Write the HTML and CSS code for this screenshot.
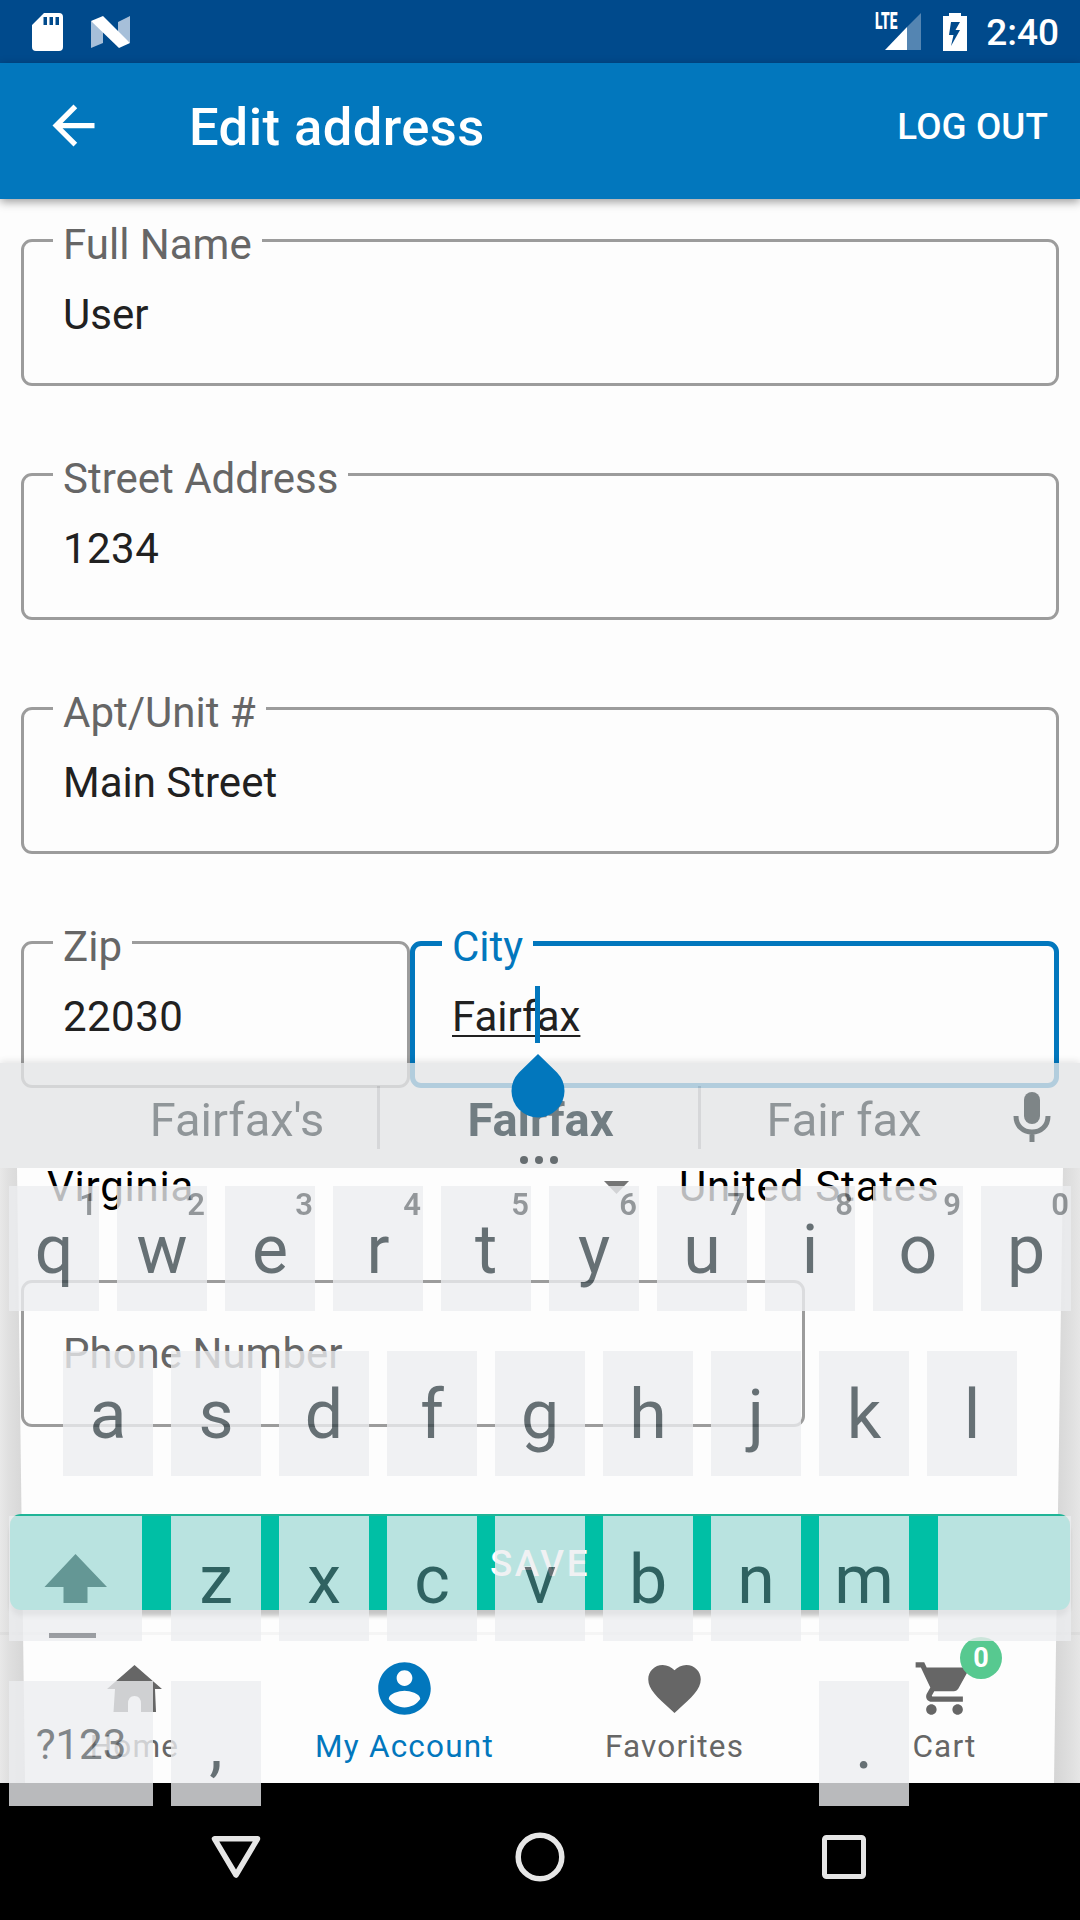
FILE: index.html
```html
<!DOCTYPE html>
<html lang="en">
<head>
<meta charset="utf-8">
<title>Edit address</title>
<link rel="stylesheet" href="styles.css">
</head>
<body>
<div class="screen">
  <div class="status">
    <svg class="sd" width="31" height="38" viewBox="0 0 31 38"><path fill="#fff" fill-rule="evenodd" d="M12 0H27Q31 0 31 4V34Q31 38 27 38H4Q0 38 0 34V12ZM11.500 4V12H15V4ZM17.500 4V12H21V4ZM23.500 4V12H27V4Z"/></svg>
    <svg class="nougat" width="39" height="32" viewBox="0 0 39 32"><path fill="#a6bfd9" d="M0 5L12 12V27L0 32ZM27 6L39 0V27L27 18Z"/><path fill="#fff" d="M0 5L12 0L39 27L28 32Z"/></svg>
    <span class="signal">
      <svg width="36" height="37" viewBox="0 0 36 37"><path fill="#fff" opacity=".33" d="M22 14L36 0V37H22Z"/><path fill="#fff" d="M0 37L22 14V37Z"/></svg>
      <span class="lte">LTE</span>
    </span>
    <svg class="battery" width="24" height="38" viewBox="0 0 24 38"><path fill="#fff" fill-rule="evenodd" d="M6 0H18V3H24V38H0V3H6ZM8 9L6 22H10.500L8 33L17 17H12.500L17 9Z"/></svg>
    <span class="time">2:40</span>
  </div>
  <header class="appbar">
    <svg class="back" width="63" height="63" viewBox="0 0 24 24"><path fill="#fff" d="M20 11H7.830l5.590-5.590L12 4l-8 8 8 8 1.410-1.410L7.830 13H20v-2z"/></svg>
    <h1 class="title">Edit address</h1>
    <span class="logout">LOG OUT</span>
  </header>
  <main class="form">
    <div class="edge edge-left"></div>
    <div class="edge edge-right"></div>
    <div class="field"><span class="label">Full Name</span><span class="value">User</span></div>
    <div class="field"><span class="label">Street Address</span><span class="value numeric">1234</span></div>
    <div class="field"><span class="label">Apt/Unit #</span><span class="value">Main Street</span></div>
    <div class="pair">
      <div class="field zip"><span class="label">Zip</span><span class="value numeric">22030</span></div>
      <div class="field city"><span class="label">City</span><span class="value composing">Fairfax</span></div>
    </div>
    <div class="selects">
      <span class="state">Virginia</span>
      <svg class="caret" width="25" height="13" viewBox="0 0 25 13"><path fill="#757575" d="M0 0H25L12.500 13Z"/></svg>
      <span class="country">United States</span>
    </div>
    <div class="field phone"><span class="hint">Phone Number</span></div>
    <button class="save">SAVE</button>
  </main>
  <nav class="tabs">
    <div class="tab">
      <svg width="63" height="63" viewBox="0 0 63 63"><path fill="#666" d="M31.500 8L59 32H52L53 55H38V47Q38 39 31.500 39Q25 39 25 47V55H10.500L12 32H4Z"/></svg>
      <span>Home</span>
    </div>
    <div class="tab active">
      <svg width="63" height="63" viewBox="0 0 24 24"><path fill="#0277bd" d="M12 2C6.480 2 2 6.480 2 12s4.480 10 10 10 10-4.480 10-10S17.520 2 12 2zm0 3c1.660 0 3 1.340 3 3s-1.340 3-3 3-3-1.340-3-3 1.340-3 3-3zm0 14.200c-2.500 0-4.710-1.280-6-3.220.03-1.990 4-3.080 6-3.080 1.990 0 5.970 1.090 6 3.080-1.290 1.940-3.500 3.220-6 3.220z"/></svg>
      <span>My Account</span>
    </div>
    <div class="tab">
      <svg width="63" height="63" viewBox="0 0 24 24"><path fill="#666" d="M12 21.350l-1.450-1.320C5.400 15.360 2 12.280 2 8.500 2 5.420 4.420 3 7.500 3c1.740 0 3.410.81 4.500 2.090C13.090 3.810 14.760 3 16.500 3 19.580 3 22 5.420 22 8.500c0 3.780-3.400 6.860-8.550 11.540L12 21.350z"/></svg>
      <span>Favorites</span>
    </div>
    <div class="tab">
      <svg width="63" height="63" viewBox="0 0 24 24"><path fill="#666" d="M7 18c-1.100 0-1.990.9-1.990 2S5.900 22 7 22s2-.9 2-2-.9-2-2-2zM1 2v2h2l3.600 7.590-1.350 2.450c-.16.28-.25.61-.25.96 0 1.100.9 2 2 2h12v-2H7.420c-.14 0-.25-.11-.25-.25l.03-.12.9-1.630h7.450c.75 0 1.410-.41 1.750-1.030l3.580-6.490c.08-.14.12-.31.12-.48 0-.55-.45-1-1-1H5.210l-.94-2H1zm16 16c-1.100 0-1.990.9-1.990 2s.89 2 1.990 2 2-.9 2-2-.9-2-2-2z"/></svg>
      <span>Cart</span>
      <b class="badge">0</b>
    </div>
  </nav>
  <div class="sysnav">
    <svg width="52" height="52" viewBox="0 0 52 52"><path fill="none" stroke="#e6e6e6" stroke-width="5.500" stroke-linejoin="round" d="M4.500 7.800H47.500L26 44Z"/></svg>
    <svg width="52" height="52" viewBox="0 0 52 52"><circle cx="26" cy="26" r="21.800" fill="none" stroke="#e6e6e6" stroke-width="5.500"/></svg>
    <svg width="52" height="52" viewBox="0 0 52 52"><rect x="6.500" y="6.500" width="39" height="39" rx="2" fill="none" stroke="#e6e6e6" stroke-width="5"/></svg>
  </div>

  <div class="keyboard">
    <div class="suggest">
      <span class="word first">Fairfax's</span>
      <span class="word main">Fairfax</span>
      <span class="word last">Fair fax</span>
      <svg class="mic" width="38" height="50" viewBox="0 0 38 50"><rect x="11" y="0" width="16" height="32" rx="8" fill="#5b6467"/><path fill="none" stroke="#5b6467" stroke-width="5" d="M3 24C3 34 10 40 19 40S35 34 35 24M19 40V50"/></svg>
      <svg class="dots" width="38" height="8" viewBox="0 0 38 8"><g fill="#3d4549"><circle cx="4" cy="4" r="4"/><circle cx="19" cy="4" r="4"/><circle cx="34" cy="4" r="4"/></g></svg>
    </div>
    <div class="keys">
      <div class="row"><span class="key">q<i>1</i></span><span class="key">w<i>2</i></span><span class="key">e<i>3</i></span><span class="key">r<i>4</i></span><span class="key">t<i>5</i></span><span class="key">y<i>6</i></span><span class="key">u<i>7</i></span><span class="key">i<i>8</i></span><span class="key">o<i>9</i></span><span class="key">p<i>0</i></span></div>
      <div class="row center"><span class="key">a</span><span class="key">s</span><span class="key">d</span><span class="key">f</span><span class="key">g</span><span class="key">h</span><span class="key">j</span><span class="key">k</span><span class="key">l</span></div>
      <div class="row spread">
        <span class="key wide"><svg width="133" height="125" viewBox="0 0 133 125"><path fill="#808d90" d="M66.500 38L98 71H78.500V87H54.500V71H35.500Z"/><path fill="#808489" d="M40 117H87V122H40Z"/></svg></span>
        <div class="letters"><span class="key">z</span><span class="key">x</span><span class="key">c</span><span class="key">v</span><span class="key">b</span><span class="key">n</span><span class="key">m</span></div>
        <span class="key wide"></span>
      </div>
      <div class="row"><span class="key symbols">?123</span><span class="key">,</span><span class="key period">.</span></div>
    </div>
  </div>
  <div class="cursor"></div>
  <svg class="handle" width="54" height="64" viewBox="0 0 54 64"><path fill="#0277bd" d="M27 0L46 18.500A26.500 26.500 0 1 1 8 18.500Z"/></svg>
</div>
</body>
</html>
```
FILE: styles.css
```css
* { box-sizing: border-box; }
body { margin: 0; font-family: Roboto, "Liberation Sans", sans-serif; }
svg { display: block; flex: none; }
.screen {
  position: relative;
  width: 1080px;
  height: 1920px;
  display: flex;
  flex-direction: column;
  overflow: hidden;
  background: #fdfdfd;
}

/* status bar */
.status {
  flex: none;
  height: 63px;
  display: flex;
  align-items: center;
  padding: 0 21px 0 32px;
  background: #004a8c;
  color: #fff;
}
.nougat { margin-left: 28px; }
.signal { position: relative; margin-left: auto; margin-right: 22px; }
.lte {
  position: absolute;
  left: -10px;
  top: -2px;
  font-size: 23px;
  line-height: 22px;
  font-weight: 900;
  transform: scaleX(.6);
  transform-origin: left;
}
.time { margin-left: 19px; font-size: 37px; line-height: 44px; font-weight: 500; padding-top: 3px; }

/* app bar */
.appbar {
  flex: none;
  height: 136px;
  display: flex;
  align-items: center;
  padding: 0 32px 10px 42px;
  background: #0277bd;
  color: #fff;
  box-shadow: 0 3px 9px rgba(0, 0, 0, .38);
  z-index: 1;
}
.back { margin-top: -1px; }
.title { margin: 2px 0 0 84px; font-size: 52.500px; line-height: 60px; font-weight: 500; letter-spacing: .45px; }
.logout { margin: 2px 0 0 auto; font-size: 36.750px; line-height: 42px; font-weight: 500; letter-spacing: .1px; }

/* form */
.form {
  position: relative;
  flex: none;
  height: 1433px;
  display: flex;
  flex-direction: column;
  padding: 40px 21px 0;
}
.edge { position: absolute; top: 969px; width: 26px; height: 615px; }
.edge-left {
  left: 0;
  background: linear-gradient(90deg, #e8e8e8, #e0e0e0 8px, #d5d5d5);
  clip-path: polygon(0 0, 17px 0, 25px 100%, 0 100%);
}
.edge-right {
  right: 0;
  background: linear-gradient(270deg, #e6e6e6, #e0e0e0 8px, #d5d5d5);
  clip-path: polygon(9px 0, 100% 0, 100% 100%, 0 100%);
}
.field {
  position: relative;
  flex: none;
  height: 147px;
  margin-bottom: 87px;
  padding: 49px 0 0 39px;
  border: 3px solid #9c9c9c;
  border-radius: 11px;
  font-size: 42px;
  line-height: 48px;
}
.label {
  position: absolute;
  left: 29px;
  top: -21px;
  padding: 0 10px;
  background: #fdfdfd;
  color: #666;
}
.value { color: #212121; white-space: nowrap; }
.numeric { letter-spacing: .45px; }
.pair { flex: none; display: flex; }
.zip { width: 389px; }
.city {
  width: 649px;
  border: 5px solid #0277bd;
  padding: 47px 0 0 37px;
}
.city .label { left: 27px; top: -23px; color: #0277bd; }
.composing {
  text-decoration: underline;
  text-decoration-thickness: 2px;
  text-underline-offset: 4px;
  text-decoration-skip-ink: none;
}
.selects {
  flex: none;
  display: flex;
  align-items: center;
  height: 48px;
  margin: -12px 0 0;
  padding-left: 26px;
  font-size: 42px;
  line-height: 48px;
  letter-spacing: .8px;
  color: #000;
}
.state { width: 536px; }
.caret { margin-left: 21px; }
.country { margin-left: 50px; }
.phone { width: 784px; margin-top: 69px; padding-top: 47px; }
.hint { color: #666; }
.save {
  position: relative;
  flex: none;
  display: flex;
  justify-content: center;
  height: 96px;
  margin: 0 -11px;
  padding: 27px 0 0;
  border: 0;
  border-top: 2px solid #1fb597;
  border-radius: 11px;
  background: #00bfa5;
  box-shadow: 0 7px 4px -1px rgba(0, 0, 0, .22);
  color: #fff;
  font: 500 36.750px/42px Roboto, sans-serif;
  letter-spacing: 2.600px;
}

/* bottom tabs */
.tabs {
  position: relative;
  flex: none;
  height: 151px;
  display: grid;
  grid-template-columns: repeat(4, 1fr);
  border-top: 3px solid rgba(0, 0, 0, .03);
}
.tab {
  position: relative;
  display: flex;
  flex-direction: column;
  align-items: center;
  padding: 22px 1px 0 0;
  font-size: 31.500px;
  line-height: 36px;
  letter-spacing: 1.200px;
  color: #666;
}
.tab span { margin-top: 9px; }
.active { color: #0277bd; }
.badge {
  position: absolute;
  left: 150px;
  top: 2px;
  width: 42px;
  height: 42px;
  border-radius: 50%;
  background: #57c990;
  color: #fff;
  font-size: 27px;
  line-height: 43px;
  font-weight: 700;
  letter-spacing: 0;
  text-align: center;
}

/* system navigation */
.sysnav {
  flex: none;
  height: 137px;
  display: flex;
  justify-content: space-between;
  align-items: center;
  padding: 11px 210px 0;
  background: #000;
}

/* half-faded keyboard above the page */
.keyboard {
  position: absolute;
  left: 0;
  top: 1063px;
  width: 1080px;
  z-index: 2;
  opacity: .787;
}
.suggest {
  position: relative;
  height: 105px;
  display: grid;
  grid-template-columns: 322px 321px 321px;
  padding-left: 58px;
  align-items: center;
  background: #e3e4e6;
  box-shadow: 0 -2px 7px rgba(0, 0, 0, .13);
  clip-path: inset(-12px 0 0 0);
}
.word {
  height: 63px;
  margin-top: 4px;
  padding-top: 2px;
  font-size: 47px;
  line-height: 63px;
  text-align: center;
  color: #72797d;
  border-right: 3px solid #cbcdcf;
}
.first { padding-left: 39px; }
.last { border: 0; padding-right: 35px; }
.main { font-weight: 700; color: #4b5a60; padding-left: 3px; }
.mic { position: absolute; left: 1013px; top: 29px; }
.dots { position: absolute; left: 520px; top: 93px; }
.keys { display: flex; flex-direction: column; gap: 40px; padding: 18px 9px 0; }
.row, .letters { display: flex; gap: 18px; }
.center { justify-content: center; }
.spread { justify-content: space-between; }
.key {
  position: relative;
  flex: none;
  width: 90px;
  height: 125px;
  padding-top: 24px;
  background: #ecedf0;
  color: #3d494e;
  font-size: 68px;
  line-height: 80px;
  text-align: center;
}
.key i {
  position: absolute;
  right: 2px;
  top: 1px;
  font-size: 31px;
  line-height: 36px;
  font-style: normal;
  font-weight: 600;
  color: #767b7f;
}
.wide { width: 133px; padding: 0; }
.symbols { width: 144px; font-size: 42px; color: #5f6569; }
.period { margin-left: auto; margin-right: 162px; }

.cursor { position: absolute; left: 535px; top: 986px; width: 5px; height: 57px; background: #0277bd; }
.handle { position: absolute; left: 511px; top: 1054px; z-index: 3; }
```
